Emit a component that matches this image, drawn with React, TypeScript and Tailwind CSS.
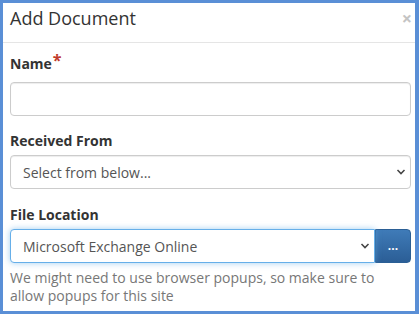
import React from "react";

function Chevron() {
  return (
    <svg className="pointer-events-none absolute right-[5px] top-1/2 h-[6px] w-[10px] -translate-y-1/2" viewBox="0 0 10 6" fill="none">
      <path d="M1.5 1l3.5 3.6L8.5 1" stroke="#444" strokeWidth="1.5" />
    </svg>
  );
}

export default function App() {
  return (
    <div
      className="h-[314px] w-[419px] overflow-hidden border-t-[3px] border-b-[3px] border-l-[3px] border-r-[4px] border-[#5a8fd6] bg-white text-[#333]"
      style={{ fontFamily: '"Open Sans", "Liberation Sans", sans-serif' }}
    >
      <div className="flex h-[40px] items-start justify-between border-b border-[#e5e5e5] pl-[7px] pr-[3px] pt-[3px]">
        <h2 className="text-[18px] leading-[24px] text-[#333]">Add Document</h2>
        <span className="mt-[3px] text-[18px] font-bold leading-none text-[#c4c4c4]">×</span>
      </div>

      <div className="pl-[7px] pr-[4px] pt-[11px]">
        <label className="flex items-start text-[14px] font-bold leading-[20px]">
          Name<span className="ml-[1px] mt-[-4px] text-[16px] text-[#c0392b]">*</span>
        </label>
        <input className="mt-[8px] block h-[34px] w-full rounded-[4px] border border-[#ccc] shadow-[inset_0_1px_1px_rgba(0,0,0,0.075)] outline-none" />

        <label className="mt-[15px] block text-[14px] font-bold leading-[20px]">Received From</label>
        <div className="relative mt-[4px]">
          <select className="block h-[34px] w-full appearance-none rounded-[4px] border border-[#ccc] bg-white px-[12px] text-[14px] text-[#555] shadow-[inset_0_1px_1px_rgba(0,0,0,0.075)] outline-none">
            <option>Select from below...</option>
          </select>
          <Chevron />
        </div>

        <label className="mt-[16px] block text-[14px] font-bold leading-[20px]">File Location</label>
        <div className="mt-[4px] flex">
          <div className="relative flex-1">
            <select className="block h-[34px] w-full appearance-none rounded-l-[4px] border border-[#66afe9] bg-white px-[12px] text-[14px] text-[#555] shadow-[0_0_6px_rgba(102,175,233,0.6)] outline-none">
              <option>Microsoft Exchange Online</option>
            </select>
            <Chevron />
          </div>
          <button className="h-[34px] w-[36px] rounded-r-[4px] border border-[#2b5f95] bg-gradient-to-b from-[#3f7bb8] to-[#2b5e96] text-[12px] font-bold leading-none text-white">
            ...
          </button>
        </div>
        <p className="mt-[6px] text-[14px] leading-[18px] text-[#777]">
          We might need to use browser popups, so make sure to allow popups for this site
        </p>
      </div>
    </div>
  );
}
